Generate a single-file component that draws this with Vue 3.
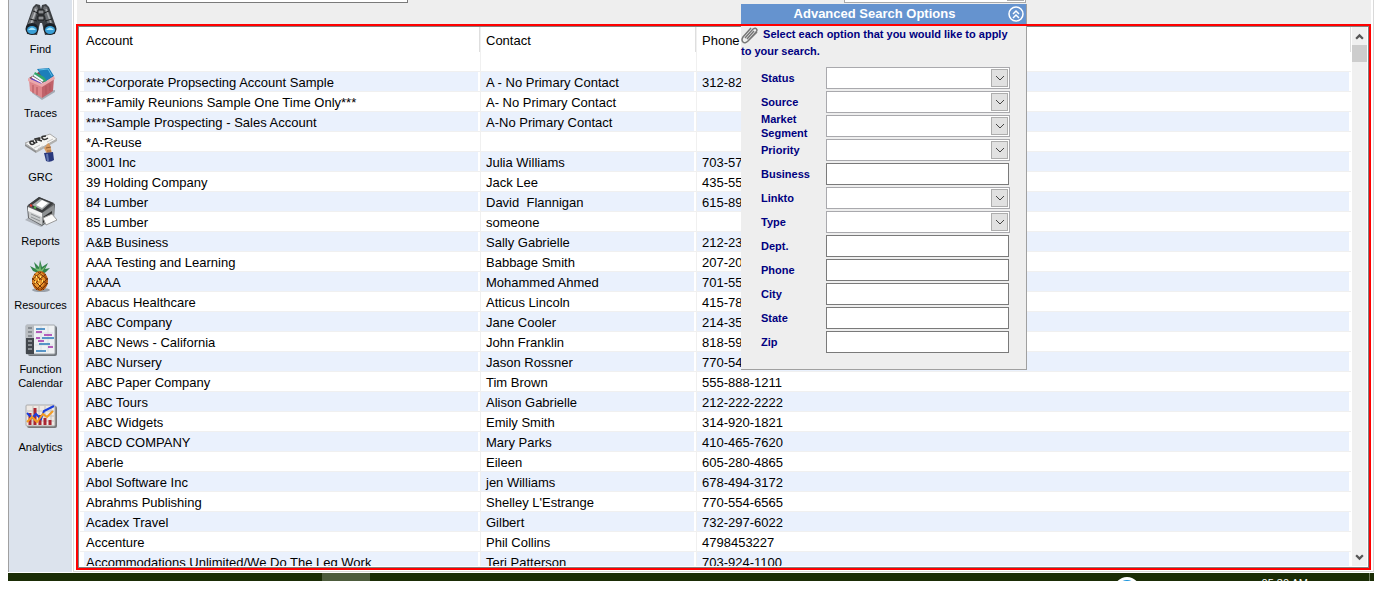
<script setup>
import { ref } from 'vue'

const navItems = [
  { icon: 'find', label: 'Find' },
  { icon: 'traces', label: 'Traces' },
  { icon: 'grc', label: 'GRC' },
  { icon: 'reports', label: 'Reports' },
  { icon: 'resources', label: 'Resources' },
  { icon: 'function', label: 'Function Calendar' },
  { icon: 'analytics', label: 'Analytics' },
]

const accounts = [
  ['****Corporate Propsecting Account Sample', 'A - No Primary Contact', '312-82'],
  ['****Family Reunions Sample One Time Only***', 'A- No Primary Contact', ''],
  ['****Sample Prospecting - Sales Account', 'A-No Primary Contact', ''],
  ['*A-Reuse', '', ''],
  ['3001 Inc', 'Julia Williams', '703-57'],
  ['39 Holding Company', 'Jack Lee', '435-55'],
  ['84 Lumber', 'David  Flannigan', '615-89'],
  ['85 Lumber', 'someone', ''],
  ['A&B Business', 'Sally Gabrielle', '212-23'],
  ['AAA Testing and Learning', 'Babbage Smith', '207-20'],
  ['AAAA', 'Mohammed Ahmed', '701-55'],
  ['Abacus Healthcare', 'Atticus Lincoln', '415-78'],
  ['ABC Company', 'Jane Cooler', '214-35'],
  ['ABC News - California', 'John Franklin', '818-59'],
  ['ABC Nursery', 'Jason Rossner', '770-54'],
  ['ABC Paper Company', 'Tim Brown', '555-888-1211'],
  ['ABC Tours', 'Alison Gabrielle', '212-222-2222'],
  ['ABC Widgets', 'Emily Smith', '314-920-1821'],
  ['ABCD COMPANY', 'Mary Parks', '410-465-7620'],
  ['Aberle', 'Eileen', '605-280-4865'],
  ['Abol Software Inc', 'jen Williams', '678-494-3172'],
  ['Abrahms Publishing', "Shelley L'Estrange", '770-554-6565'],
  ['Acadex Travel', 'Gilbert', '732-297-6022'],
  ['Accenture', 'Phil Collins', '4798453227'],
  ['Accommodations Unlimited/We Do The Leg Work', 'Teri Patterson', '703-924-1100'],
]

const fields = [
  { id: 'status', label: 'Status', select: true },
  { id: 'source', label: 'Source', select: true },
  { id: 'segment', label: 'Market Segment', select: true },
  { id: 'priority', label: 'Priority', select: true },
  { id: 'business', label: 'Business' },
  { id: 'linkto', label: 'Linkto', select: true },
  { id: 'type', label: 'Type', select: true },
  { id: 'dept', label: 'Dept.' },
  { id: 'phone', label: 'Phone' },
  { id: 'city', label: 'City' },
  { id: 'state', label: 'State' },
  { id: 'zip', label: 'Zip' },
]

const values = ref(Object.fromEntries(fields.map((f) => [f.id, ''])))
</script>

<template>
  <div class="screen">
    <div class="app">
      <nav class="sidebar">
        <a v-for="item in navItems" :key="item.icon" href="#" class="nav-item">
          <svg v-if="item.icon === 'find'" class="icon" viewBox="0 0 32 32">
            <path d="M8 3l3-3 4 1 1 4 1-4 4-1 3 3 7 20-1 7-10 1-3-12h-2l-3 12-10-1-1-7z" fill="#3c3f43" />
            <path d="M9 4l3-2 1 3-5 16-5-1z" fill="#77797d" />
            <path d="M10 5l1 1-5 14" fill="none" stroke="#b4b7ba" stroke-width="1.5" />
            <path d="M19 2l3 1 6 17-5 1-5-16z" fill="#6b6e72" />
            <path d="M21 5l5 14" fill="none" stroke="#a5a8ab" stroke-width="1.5" />
            <path d="M13 6h6v4h-6zM13 12h6v4h-6z" fill="#8b8d91" stroke="#17191b" />
            <path d="M8 7l5 2M19 9l5-2M5 15l7 2M20 17l7-2" stroke="#1c1e20" />
            <ellipse cx="7" cy="25" rx="6.5" ry="6" fill="#1b2026" />
            <ellipse cx="25" cy="25" rx="6.5" ry="6" fill="#1b2026" />
            <ellipse cx="7" cy="26" rx="5" ry="4" fill="#3a9fd6" />
            <ellipse cx="25" cy="26" rx="5" ry="4" fill="#3a9fd6" />
            <path d="M3 26q4-5 8 0M21 26q4-5 8 0" fill="#a9e6fb" />
          </svg>
          <svg v-else-if="item.icon === 'traces'" class="icon" viewBox="0 0 32 32">
            <path d="M7 25l10 7 13-8v-2z" fill="#a5abb5" />
            <path d="M4 10L17 2l12 6-13 8z" fill="#8d3b43" />
            <path d="M12 1l12-1 5 8-9 6z" fill="#1d7fba" />
            <path d="M14 2l9-1 4 7" fill="none" stroke="#5dbbe5" />
            <path d="M10 4l9 5 3 4-4 1-10-6z" fill="#31a66c" />
            <path d="M9 7l9 6M7 9l10 6" stroke="#f4f4ff" stroke-width="2" />
            <path d="M6 11l10 5" stroke="#6546c6" stroke-width="2" />
            <path d="M4 11l13 6v13L5 23z" fill="#de868b" />
            <path d="M17 17l12-7-1 13-11 7z" fill="#c0626a" />
            <path d="M3 10l14 6 12-8 1 3-13 8L3 13z" fill="#eba8ab" />
            <path d="M8 17v8M12 19v8M21 18v8M25 16v7" stroke="#b1555d" />
          </svg>
          <svg v-else-if="item.icon === 'grc'" class="icon" viewBox="0 0 32 32">
            <path d="M0 11L25 2l7 5-21 12z" fill="#f5f5f3" stroke="#aaa" />
            <path d="M0 12l11 7v2L0 14z" fill="#8d8e8e" />
            <path d="M11 19l21-12v2L11 21z" fill="#b0b0ae" />
            <path d="M9 9q-5 0-4 2 2 3 5 0l-2-1M12 11l-2-4 4-1q2 1-1 2l4 1M21 4q-5 0-4 2 2 3 6 0" fill="none" stroke="#333" stroke-width="1.5" />
            <path d="M9 16l6-3M13 17l5-3M22 10l6-3" stroke="#c4c4c4" />
            <path d="M21 14q2-5 4-1l2 8-5 1-3-6z" fill="#d79b62" />
            <path d="M21 16l5-1M22 19h4" stroke="#945f32" />
            <path d="M19 21l9-1 1 8q-4 3-8 1z" fill="#29387d" />
            <path d="M22 22l1 7" stroke="#6377b0" stroke-width="2" />
          </svg>
          <svg v-else-if="item.icon === 'reports'" class="icon" viewBox="0 0 32 32">
            <path d="M0 24l4-3 14 9-2 1z" fill="#b0b5bc" />
            <path d="M2 10L14 1l16 7-1 14-12 8L3 22z" fill="#5c5e60" />
            <path d="M3 9L14 1l15 6-12 10z" fill="#3b3d3f" />
            <path d="M7 9l8-6 10 4-8 7z" fill="#a8acad" />
            <path d="M11 9l6-5 6 3-6 5z" fill="#fff" />
            <path d="M3 12l14 6v11L4 22z" fill="#c9cbcc" />
            <path d="M3 11l14 6v4L3 15z" fill="#f2f2f2" />
            <path d="M17 17l12-8v12l-12 8z" fill="#8e9193" />
            <path d="M6 18l9 4M6 21l9 4" stroke="#8d9092" />
            <path d="M18 21l9-6v6l-9 6z" fill="#2b2c2d" />
            <path d="M18 22l9-4 5 6-11 5z" fill="#fafafa" stroke="#999" />
            <path d="M5 9l2 1" stroke="#db352c" stroke-width="2" />
            <path d="M9 11l2 1" stroke="#4bb345" stroke-width="2" />
          </svg>
          <svg v-else-if="item.icon === 'resources'" class="icon" viewBox="0 0 32 32">
            <ellipse cx="17" cy="30" rx="9" ry="2" fill="#9aa1aa" />
            <path d="M16 14L9 11l-3-5 6 3-2-7 5 5 1-7 2 7 6-4-3 6 5-1-4 4-5 3z" fill="#32834b" />
            <path d="M15 12l-5-4 5 1 1-6 1 7 5-4-4 6z" fill="#79bd72" />
            <ellipse cx="16" cy="21" rx="8" ry="10" fill="#b85c10" />
            <ellipse cx="15" cy="20" rx="6" ry="8" fill="#e8942c" />
            <path d="M10 14l13 10M8 18l12 12M14 12l10 8M8 23l7 7M22 14L9 25M24 18L12 30M17 12L8 20M24 23l-7 7" stroke="#71340a" />
            <path d="M12 17h1M16 17h1M14 20h1M11 22h1M18 21h1M15 24h1" stroke="#ffe66c" stroke-width="2" />
          </svg>
          <svg v-else-if="item.icon === 'function'" class="icon" viewBox="0 0 32 32">
            <rect x="3" y="2" width="29" height="30" rx="2" fill="#70757b" />
            <rect x="1" y="1" width="29" height="29" rx="1" fill="#eef1f3" stroke="#a2a7ac" />
            <path d="M1 1h8v14H1z" fill="#b9bdc1" />
            <path d="M1 14h8v16H1z" fill="#42474d" />
            <path d="M3 4h4M3 8h4M3 12h4M3 17h4M3 21h4M3 25h4" stroke="#888d92" stroke-width="2" />
            <path d="M10 9h18M10 15h18M10 21h18M16 2v26M23 2v26" stroke="#dadfe3" />
            <path d="M11 5h9M17 14h12M14 20h11M11 27h10" stroke="#2878bb" stroke-width="1.5" />
            <path d="M11 8h6M19 11h8M11 14h4M13 17h6M23 23h5" stroke="#a12ca8" stroke-width="1.5" />
          </svg>
          <svg v-else class="icon" viewBox="0 0 32 32">
            <rect x="2" y="4" width="30" height="22" rx="2" fill="#777" />
            <rect x="1" y="3" width="29" height="21" rx="1" fill="#eee9e4" stroke="#aaa" />
            <path d="M2 9h27M2 14h27M2 19h27M8 4v20M14 4v20M20 4v20M26 4v20" stroke="#c4c0bc" />
            <path d="M5 11v12M10 6v17M15 13v10M20 16v7M25 18v5" stroke="#aa2732" stroke-width="3" />
            <path d="M2 11l5 5 4-4 5 5 3-8 10-5" fill="none" stroke="#193ddd" stroke-width="2" />
            <path d="M2 20l5-5 5 5 6-8 4 3 6-6" fill="none" stroke="#f49c22" stroke-width="2" />
          </svg>
          <span class="nav-label">{{ item.label }}</span>
        </a>
      </nav>

      <main class="content">
        <div class="toolbar">
          <input class="quick-search" type="text" aria-label="Search" />
          <div class="top-select"><span></span></div>
        </div>

        <div class="list">
          <div class="list-view">
            <table class="grid">
              <colgroup>
                <col class="col-account" />
                <col class="col-contact" />
                <col />
              </colgroup>
              <thead>
                <tr><th>Account</th><th>Contact</th><th>Phone</th></tr>
              </thead>
              <tbody>
                <tr v-for="row in accounts" :key="row[0]">
                  <td v-for="(cell, i) in row" :key="i">{{ cell }}</td>
                </tr>
              </tbody>
            </table>
          </div>
          <div class="scrollbar">
            <button type="button" aria-label="Scroll up">
              <svg viewBox="0 0 8 6"><path d="M1 5l3-3 3 3" /></svg>
            </button>
            <div class="thumb"></div>
            <button type="button" class="down" aria-label="Scroll down">
              <svg viewBox="0 0 8 6"><path d="M1 1l3 3 3-3" /></svg>
            </button>
          </div>
        </div>

        <section class="options">
          <header class="options-head">
            <h2>Advanced Search Options</h2>
            <button type="button" class="collapse" aria-label="Collapse">
              <svg viewBox="0 0 16 16">
                <circle cx="8" cy="8" r="7" />
                <path d="M5 8l3-3 3 3M5 12l3-3 3 3" />
              </svg>
            </button>
          </header>
          <p class="hint">
            <svg class="clip" viewBox="0 0 18 18">
              <path d="M4 12L12 3q3-2 4 1 0 1-1 2l-8 9q-3 3-5 1-2-2 0-5l8-9M6 13l7-8M8 14l8-8" />
            </svg>
            Select each option that you would like to apply to your search.
          </p>
          <form class="fields" @submit.prevent>
            <div v-for="field in fields" :key="field.id" class="field">
              <label :for="field.id">{{ field.label }}</label>
              <div v-if="field.select" class="select">
                <select :id="field.id" v-model="values[field.id]"><option value=""></option></select>
                <span class="arrow"><svg viewBox="0 0 10 6"><path d="M1 1l4 4 4-4" /></svg></span>
              </div>
              <input v-else :id="field.id" v-model="values[field.id]" type="text" />
            </div>
          </form>
        </section>
      </main>
    </div>

    <footer class="taskbar">
      <div class="task-active"></div>
      <div class="tray-icon"></div>
      <time class="clock">05:30 AM</time>
      <div class="show-desktop"></div>
    </footer>
  </div>
</template>

<style>
body {
  background: #fff;
}
</style>

<style scoped>
.screen {
  box-sizing: border-box;
  display: flex;
  flex-direction: column;
  height: 100vh;
  padding: 0 8px 13px;
  font-family: "Liberation Sans", Arial, sans-serif;
  color: #000;
}

.app {
  display: flex;
  flex: 1;
  min-height: 0;
}

.sidebar {
  box-sizing: border-box;
  display: flex;
  flex-direction: column;
  align-items: center;
  gap: 12px;
  flex: 0 0 64px;
  padding-top: 4px;
  margin-bottom: 1px;
  overflow: hidden;
  background: #dce3ed;
  border-left: 1px solid #a0a0a0;
}

.nav-item {
  display: flex;
  flex-direction: column;
  align-items: center;
  gap: 6px;
  color: #000;
  font-size: 11px;
  line-height: 14px;
  text-align: center;
  text-decoration: none;
}

.icon {
  width: 32px;
  height: 32px;
}

.content {
  position: relative;
  display: flex;
  flex: 1;
  flex-direction: column;
  min-width: 0;
  margin: 0 0 1px 1px;
  padding: 0 2px 1px 2px;
  border: solid #d9d9d9;
  border-width: 0 1px 1px;
}

.content::after {
  content: "";
  position: absolute;
  inset: 24px 2px 1px 2px;
  border: 2px solid #f00;
  pointer-events: none;
}

.toolbar {
  display: flex;
  justify-content: space-between;
  height: 24px;
  margin-left: 1px;
  padding: 0 345px 0 9px;
  background: #eee;
}

.quick-search {
  box-sizing: border-box;
  width: 322px;
  height: 3px;
  padding: 0;
  border: solid #7a7a7a;
  border-width: 0 1px 1px;
  background: #fff;
}

.top-select {
  box-sizing: border-box;
  display: flex;
  justify-content: flex-end;
  width: 182px;
  height: 3px;
  padding-right: 1px;
  border: solid #a9a9a9;
  border-width: 0 1px 1px;
  background: #fff;
}

.top-select span {
  width: 17px;
  height: 1px;
  background: #adadad;
}

.list {
  display: flex;
  flex: 1;
  min-height: 0;
  margin: 2px;
  padding: 0 1px 1px 1px;
  border: 1px solid #808080;
  background: #fff;
}

.list-view {
  flex: 1;
  overflow: hidden;
}

.grid {
  width: 100%;
  table-layout: fixed;
  border-collapse: separate;
  border-spacing: 0;
  font-size: 13px;
  line-height: 17px;
}

.col-account {
  width: 400px;
}

.col-contact {
  width: 216px;
}

.grid th {
  height: 39px;
  padding: 5px 5px 0;
  font-weight: 400;
  text-align: left;
  vertical-align: top;
  border-left: 1px solid #f0f0f0;
  background: linear-gradient(#dedede, #dedede) no-repeat right top / 1px 25px;
}

.grid td {
  height: 17px;
  padding: 2px 5px 0;
  overflow: hidden;
  white-space: pre;
  border: solid #f0f0f0;
  border-width: 1px 0 0 1px;
}

.grid th:first-child,
.grid td:first-child {
  border-left: 0;
  padding-left: 6px;
}

.grid tbody tr:nth-child(odd) td {
  background: linear-gradient(#eaf1fd, #eaf1fd) no-repeat left / calc(100% - 2px) 100%;
}

.grid tbody tr:nth-child(odd) td:first-child {
  background-position: 4px 0;
  background-size: calc(100% - 6px) 100%;
}

.scrollbar {
  display: flex;
  flex-direction: column;
  align-items: center;
  flex: 0 0 15px;
  margin-left: 1px;
  background: #f0f0f0;
}

.scrollbar button {
  display: flex;
  align-items: center;
  justify-content: center;
  width: 15px;
  height: 18px;
  padding: 0;
  border: 0;
  background: none;
}

.scrollbar svg {
  width: 9px;
  height: 7px;
  fill: none;
  stroke: #555;
  stroke-width: 2;
}

.scrollbar .down {
  margin-top: auto;
}

.thumb {
  width: 15px;
  height: 17px;
  background: #cdcdcd;
}

.options {
  position: absolute;
  top: 4px;
  right: 346px;
  box-sizing: border-box;
  width: 286px;
  padding-bottom: 16px;
  background: #eee;
  border: solid #a0a0a0;
  border-width: 0 1px 1px 0;
}

.options-head {
  display: flex;
  align-items: center;
  height: 20px;
  padding: 0 2px 2px 0;
  background: #6593cf;
}

.options-head h2 {
  flex: 1;
  margin: 0;
  font-size: 13px;
  line-height: 18px;
  text-align: center;
  color: #fff;
}

.collapse {
  width: 16px;
  height: 16px;
  padding: 0;
  border: 0;
  background: none;
}

.collapse svg {
  display: block;
  fill: none;
  stroke: #fff;
  stroke-width: 1.5;
}

.hint {
  margin: 0;
  padding: 0 12px 7px 0;
  font-size: 11px;
  font-weight: 700;
  line-height: 17px;
  color: #000080;
}

.clip {
  width: 18px;
  height: 18px;
  margin: 0 1px -6px 0;
  fill: none;
  stroke: #777;
  stroke-width: 1.5;
}

.fields {
  display: flex;
  flex-direction: column;
  gap: 2px;
  padding: 0 16px 0 20px;
}

.field {
  display: flex;
  align-items: center;
  height: 22px;
}

.field label {
  flex: 0 0 50px;
  margin-right: 15px;
  font-size: 11px;
  font-weight: 700;
  line-height: 14px;
  color: #000080;
}

.field input {
  box-sizing: border-box;
  flex: 1;
  min-width: 0;
  height: 22px;
  margin-right: 1px;
  padding: 0 4px;
  border: 1px solid #7a7a7a;
  background: #fff;
}

.select {
  position: relative;
  flex: 1;
}

.select select {
  box-sizing: border-box;
  display: block;
  width: 100%;
  height: 22px;
  appearance: none;
  border: 1px solid #a9a9ad;
  border-radius: 0;
  background: #fff;
}

.arrow {
  position: absolute;
  top: 2px;
  right: 2px;
  box-sizing: border-box;
  display: flex;
  align-items: center;
  justify-content: center;
  width: 17px;
  height: 18px;
  border: 1px solid #adadad;
  background: #e1e1e1;
  pointer-events: none;
}

.arrow svg {
  width: 10px;
  height: 6px;
  fill: none;
  stroke: #444;
}

.taskbar {
  display: flex;
  flex: 0 0 8px;
  overflow: hidden;
  background: #1b2d06;
}

.task-active {
  width: 48px;
  margin-left: 314px;
  background: #4d5c3d;
}

.tray-icon {
  box-sizing: border-box;
  width: 26px;
  height: 26px;
  margin: 4px 122px 0 auto;
  border: 3px solid #fff;
  border-radius: 50%;
  background: #1a94dc;
}

.clock {
  margin-top: 3px;
  font-size: 11px;
  line-height: 14px;
  color: #fff;
}

.show-desktop {
  width: 4px;
  margin-left: 61px;
  border-left: 1px solid #6d7a5d;
}
</style>
